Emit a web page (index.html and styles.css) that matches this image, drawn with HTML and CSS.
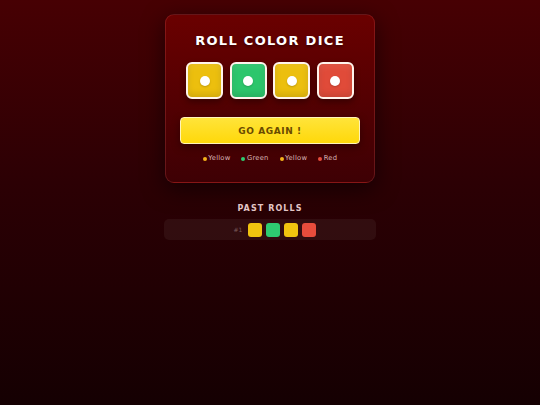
FILE: index.html
```html
<!DOCTYPE html>
<html>
	<head>
		<meta charset="utf-8" />
		<meta name="viewport" content="width=device-width, initial-scale=1" />
		<title>Roll Color Dice</title>
		<link rel="stylesheet" href="styles.css">
	</head>
	<body>
		<main class="app">
			<section class="card">
				<h1 class="title">ROLL COLOR DICE</h1>
				<div class="dice">
					<div class="die yellow"><span class="pip"></span></div>
					<div class="die green"><span class="pip"></span></div>
					<div class="die yellow"><span class="pip"></span></div>
					<div class="die red"><span class="pip"></span></div>
				</div>
				<button class="roll-btn" type="button">GO AGAIN !</button>
				<ul class="legend">
					<li><span class="swatch yellow"></span>Yellow</li>
					<li><span class="swatch green"></span>Green</li>
					<li><span class="swatch yellow"></span>Yellow</li>
					<li><span class="swatch red"></span>Red</li>
				</ul>
			</section>
			<section class="history">
				<h2 class="history-title">PAST ROLLS</h2>
				<div class="history-row">
					<span class="roll-no">#1</span>
					<span class="chip yellow"></span>
					<span class="chip green"></span>
					<span class="chip yellow"></span>
					<span class="chip red"></span>
				</div>
			</section>
		</main>
	</body>
</html>
```

FILE: styles.css
```css
html, body {
	height: 100%;
}
body {
	margin: 0; padding: 0;
	background: linear-gradient(180deg, #470003 0%, #2c0004 45%, #150002 100%);
	font: 8px "DejaVu Sans", Verdana, sans-serif;
	color: #fff;
}
.app {
	display: flex; flex-direction: column; align-items: center;
	padding-top: 14px;
}
.card {
	width: 210px; box-sizing: border-box;
	padding: 17px 14px 19px;
	border: 1px solid rgba(255, 110, 110, 0.2);
	border-radius: 9px;
	background: linear-gradient(180deg, #6a0000 0%, #3e0004 100%);
	box-shadow: 0 6px 22px rgba(0, 0, 0, 0.55);
	display: flex; flex-direction: column; align-items: center;
}
.title {
	margin: 0;
	font-size: 13px; line-height: 18px; font-weight: bold;
	letter-spacing: 1.3px;
	color: #fff;
	text-shadow: 0 2px 3px rgba(0, 0, 0, 0.4);
}
.dice {
	display: flex; gap: 6.6px;
	margin-top: 12px;
}
.die {
	width: 37px; height: 37px; box-sizing: border-box;
	border: 2px solid #fff4ec;
	border-radius: 6px;
	display: flex; align-items: center; justify-content: center;
	box-shadow: inset 0 -3px 6px rgba(0, 0, 0, 0.12), inset 0 3px 6px rgba(255, 255, 255, 0.08), 0 3px 6px rgba(0, 0, 0, 0.35);
}
.die.yellow { background: #ecbf0e; }
.die.green { background: #2cc66c; }
.die.red { background: #e04b39; }
.pip {
	width: 10px; height: 10px;
	border-radius: 50%;
	background: #fff;
	box-shadow: 0 1px 2px rgba(0, 0, 0, 0.2);
}
.roll-btn {
	width: 100%; height: 27px;
	margin-top: 18px; padding: 0;
	border: 1.5px solid #fff3b8;
	border-radius: 4px;
	background: linear-gradient(180deg, #ffe43a 0%, #ffd80a 100%);
	color: #6a4a00;
	font: bold 9px "DejaVu Sans", Verdana, sans-serif;
	letter-spacing: 0.6px;
	box-shadow: 0 3px 8px rgba(0, 0, 0, 0.35);
}
.legend {
	list-style: none;
	margin: 9px 0 0; padding: 0;
	display: flex; gap: 11px;
	font-size: 6.8px; line-height: 10px;
	letter-spacing: 0.2px;
	color: #d8b4b4;
}
.legend li {
	display: flex; align-items: center; gap: 1.5px;
}
.swatch {
	width: 4px; height: 4px;
	border-radius: 50%;
	margin-top: 1px;
}
.swatch.yellow, .chip.yellow { background: #f1c40f; }
.swatch.yellow { background: #f3b21a; }
.swatch.green, .chip.green { background: #2ecc71; }
.swatch.red, .chip.red { background: #e74c3c; }
.history {
	width: 212px;
	margin-top: 20px;
	display: flex; flex-direction: column; align-items: center;
}
.history-title {
	margin: 0;
	font-size: 8px; line-height: 11px; font-weight: bold;
	letter-spacing: 1.1px;
	color: #e3c6c6;
}
.history-row {
	width: 100%; height: 21px; box-sizing: border-box;
	margin-top: 5px;
	border-radius: 5px;
	background: rgba(255, 255, 255, 0.05);
	display: flex; align-items: center; justify-content: center; gap: 4px;
	padding-left: 10px;
}
.roll-no {
	font-size: 6px;
	color: #7a5a5a;
	margin-right: 2px;
}
.chip {
	width: 14px; height: 14px;
	border-radius: 3px;
}
```
